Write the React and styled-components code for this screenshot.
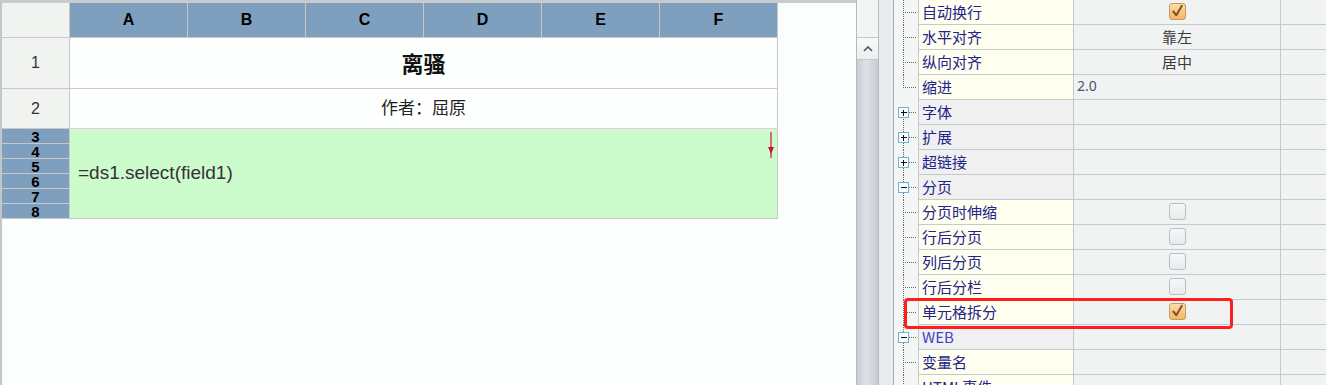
import React from "react";
import styled, { createGlobalStyle } from "styled-components";

const GlobalStyle = createGlobalStyle`
  *, *::before, *::after { box-sizing: border-box; }
  html, body { margin: 0; padding: 0; background: #fbfefd; }
  body { font-family: "Liberation Sans", Arial, sans-serif; }
`;

const CJK = `"Noto Sans CJK SC", "Noto Sans", sans-serif`;

const columns = ["A", "B", "C", "D", "E", "F"];
const subRows = [3, 4, 5, 6, 7, 8];

const props = [
  { name: "自动换行", check: true },
  { name: "水平对齐", text: "靠左" },
  { name: "纵向对齐", text: "居中" },
  { name: "缩进", text: "2.0", left: true, last: true },
  { name: "字体", group: "+", first: true },
  { name: "扩展", group: "+" },
  { name: "超链接", group: "+" },
  { name: "分页", group: "-" },
  { name: "分页时伸缩", check: false },
  { name: "行后分页", check: false },
  { name: "列后分页", check: false },
  { name: "行后分栏", check: false },
  { name: "单元格拆分", check: true, marked: true },
  { name: "WEB", group: "-", web: true },
  { name: "变量名" },
  { name: "HTML事件" },
];

function TreeLines({ item }) {
  const lineTop = item.first ? 17 : 0;
  const lineBottom = item.last ? 12.5 : 25;
  return (
    <svg width="24" height="25" shapeRendering="crispEdges">
      <line x1="9.5" y1={lineTop} x2="9.5" y2={lineBottom} stroke="#666" strokeDasharray="1 1" />
      <line x1={item.group ? 15 : 11} y1="12.5" x2="23" y2="12.5" stroke="#666" strokeDasharray="1 1" />
      {item.group && (
        <g>
          <rect x="4.5" y="7.5" width="10" height="10" fill="#fbfdfe" stroke="#6cb2d2" />
          <line x1="6.5" y1="12.5" x2="13" y2="12.5" stroke="#111" />
          {item.group === "+" && <line x1="9.5" y1="9.5" x2="9.5" y2="16" stroke="#111" />}
        </g>
      )}
    </svg>
  );
}

function CheckBox({ checked }) {
  return (
    <Box $checked={checked}>
      {checked && (
        <svg width="16" height="16" viewBox="0 0 16 16">
          <path d="M3.5 7.5 L6.8 11.5 L12.5 1.5" fill="none" stroke="#8a5320" strokeWidth="2.2" strokeLinecap="round" strokeLinejoin="round" />
        </svg>
      )}
    </Box>
  );
}

export default function App() {
  return (
    <Root>
      <GlobalStyle />
      <Sheet>
        <SheetGrid>
          <Corner />
          {columns.map((c) => (
            <ColHead key={c}>{c}</ColHead>
          ))}
          <RowHead>1</RowHead>
          <TitleCell>离骚</TitleCell>
          <RowHead>2</RowHead>
          <AuthorCell>作者：屈原</AuthorCell>
          {subRows.map((r, i) => (
            <SubRowHead key={r} style={{ gridRow: i + 4 }}>
              {r}
            </SubRowHead>
          ))}
          <FormulaCell>
            =ds1.select(field1)
            <Arrow width="8" height="27" viewBox="0 0 8 27">
              <line x1="4" y1="0" x2="4" y2="26" stroke="#d8305a" strokeWidth="1.4" />
              <path d="M1 15 L4 22 L7 15 Z" fill="#c8103c" />
            </Arrow>
          </FormulaCell>
        </SheetGrid>
      </Sheet>

      <ScrollBar>
        <ScrollTop />
        <ScrollButton>
          <svg width="10" height="6" viewBox="0 0 10 6">
            <path d="M1 5 L5 1 L9 5" fill="none" stroke="#555" strokeWidth="1.6" />
          </svg>
        </ScrollButton>
        <ScrollTrack />
      </ScrollBar>
      <Gutter />

      <PropPanel>
        {props.map((p) => (
          <PropRow key={p.name}>
            <TreeCell>
              <TreeLines item={p} />
            </TreeCell>
            <NameCell $group={!!p.group} $web={p.web}>
              {p.name}
            </NameCell>
            <ValueCell $left={p.left}>
              {p.check !== undefined && <CheckBox checked={p.check} />}
              {p.text && <ValueText $num={p.left}>{p.text}</ValueText>}
            </ValueCell>
            <ExtraCell />
            {p.marked && <Highlight />}
          </PropRow>
        ))}
      </PropPanel>
    </Root>
  );
}

const Root = styled.div`
  display: flex;
  width: 1326px;
  height: 385px;
  overflow: hidden;
  background: #fbfefd;
`;

const Sheet = styled.div`
  width: 856px;
  flex: none;
  border-top: 3px solid #c8cccc;
  border-left: 2px solid #c2c6c6;
  display: flex;
  flex-direction: column;
  align-items: flex-start;
`;

const SheetGrid = styled.div`
  display: grid;
  grid-template-columns: 67px repeat(6, 117px);
  grid-template-rows: 34px 50px 39px repeat(6, 14px);
  gap: 1px;
  padding: 0 1px 1px 0;
  background: #c8c8c8;
`;

const Corner = styled.div`
  background: #f1f3f1;
`;

const ColHead = styled.div`
  background: #7f9fbf;
  display: flex;
  align-items: center;
  justify-content: center;
  font-weight: bold;
  font-size: 16px;
  color: #000;
`;

const RowHead = styled.div`
  background: #f1f3f1;
  display: flex;
  align-items: center;
  justify-content: center;
  font-size: 16px;
  color: #333;
`;

const SubRowHead = styled.div`
  grid-column: 1;
  background: #7f9fbf;
  display: flex;
  align-items: center;
  justify-content: center;
  font-weight: bold;
  font-size: 15px;
  line-height: 13px;
  color: #000;
`;

const TitleCell = styled.div`
  grid-column: 2 / span 6;
  background: #fcfffe;
  display: flex;
  align-items: center;
  justify-content: center;
  padding-bottom: 3px;
  font-family: ${CJK};
  font-weight: bold;
  font-size: 22px;
  line-height: 1;
  color: #111;
`;

const AuthorCell = styled(TitleCell)`
  font-weight: normal;
  font-size: 17px;
  padding-bottom: 4px;
  color: #222;
`;

const FormulaCell = styled.div`
  grid-column: 2 / span 6;
  grid-row: 4 / span 6;
  position: relative;
  background: #ccfccc;
  box-shadow: 0 -1px 0 #efc6ef;
  display: flex;
  align-items: center;
  padding-left: 8px;
  padding-bottom: 2px;
  font-size: 19px;
  color: #3a2f3a;
`;

const Arrow = styled.svg`
  position: absolute;
  top: 3px;
  right: 2px;
`;

const ScrollBar = styled.div`
  width: 23px;
  flex: none;
  border-left: 1px solid #b6babe;
  border-right: 1px solid #b6babe;
  display: flex;
  flex-direction: column;
`;

const ScrollTop = styled.div`
  height: 37px;
  background: #f3f4f4;
`;

const ScrollButton = styled.div`
  height: 23px;
  background: linear-gradient(#f8f9f9, #eceeef);
  border-top: 1px solid #c4c8cc;
  border-bottom: 1px solid #c4c8cc;
  display: flex;
  align-items: center;
  justify-content: center;
`;

const ScrollTrack = styled.div`
  flex: 1;
  background: linear-gradient(to right, #c8cdd3, #dee1e5 45%, #d4d8dd 70%, #c6cbd1);
`;

const Gutter = styled.div`
  width: 14px;
  flex: none;
  background: #e9ebec;
`;

const PropPanel = styled.div`
  flex: 1;
  border-left: 1px solid #a2acb4;
  background: #f4f5f5;
  display: flex;
  flex-direction: column;
`;

const PropRow = styled.div`
  position: relative;
  display: flex;
  height: 25px;
  flex: none;
`;

const TreeCell = styled.div`
  width: 24px;
  flex: none;
  background: #f4f5f5;
  display: flex;
`;

const Cell = styled.div`
  border-left: 1px solid #c2cad0;
  border-bottom: 1px solid #c2cad0;
  background: #f1f2f2;
  display: flex;
  align-items: center;
`;

const NameCell = styled(Cell)`
  width: 155px;
  flex: none;
  padding-left: 3px;
  padding-bottom: 2px;
  background: ${(p) => (p.$group ? "#f0f0f0" : "#fffff0")};
  font-family: ${CJK};
  font-size: 15px;
  line-height: 1;
  color: ${(p) => (p.$web ? "#4242cc" : "#23238a")};
`;

const ValueCell = styled(Cell)`
  width: 207px;
  flex: none;
  justify-content: ${(p) => (p.$left ? "flex-start" : "center")};
  padding-left: ${(p) => (p.$left ? "3px" : "0")};
  padding-bottom: 1px;
`;

const ValueText = styled.span`
  font-family: ${(p) => (p.$num ? `"Noto Sans", sans-serif` : CJK)};
  font-size: ${(p) => (p.$num ? "14px" : "15px")};
  line-height: 1;
  padding-bottom: 1px;
  color: ${(p) => (p.$num ? "#4b5569" : "#3a3a3a")};
`;

const ExtraCell = styled(Cell)`
  flex: 1;
`;

const Box = styled.span`
  width: 17px;
  height: 17px;
  border-radius: 3px;
  border: 1px solid ${(p) => (p.$checked ? "#c39a66" : "#b9bfc5")};
  background: ${(p) =>
    p.$checked
      ? "linear-gradient(#fcdcaa, #f5b866)"
      : "linear-gradient(#f6f7f8, #e8eaec)"};
  display: flex;
  align-items: center;
  justify-content: center;
`;

const Highlight = styled.div`
  position: absolute;
  z-index: 2;
  left: 10px;
  top: -2px;
  width: 329px;
  height: 31px;
  border: 3px solid #ff1e1e;
  border-radius: 4px;
  pointer-events: none;
`;
